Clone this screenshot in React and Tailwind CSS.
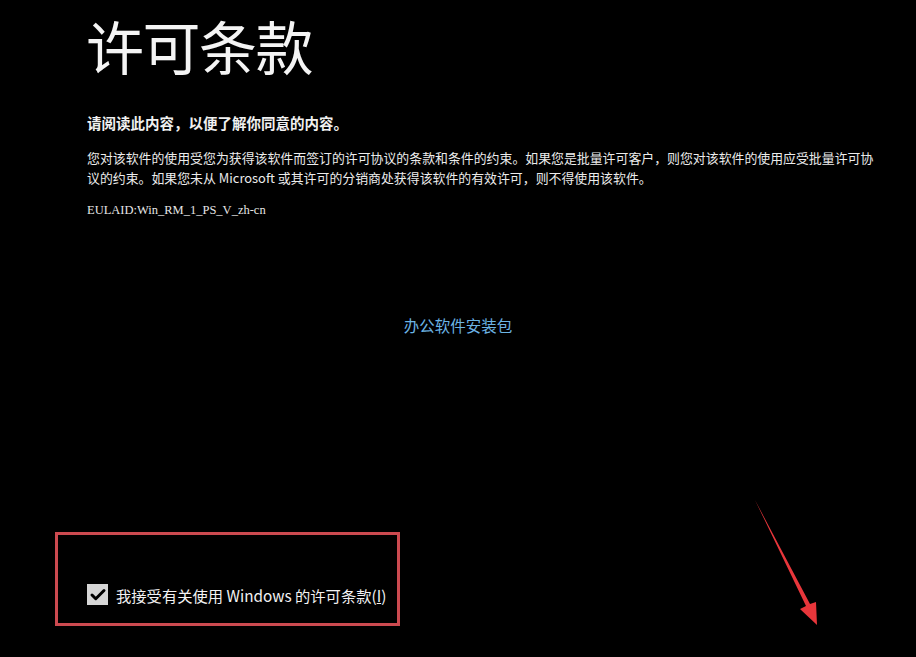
import { Check } from 'lucide-react';

const cjk = { fontFamily: '"Noto Sans CJK SC", "Noto Sans", sans-serif' };

export default function App() {
    return (
        <div className="relative w-[916px] h-[657px] overflow-hidden bg-black text-white font-['Noto_Sans_CJK_SC',sans-serif]">
            <div className="flex flex-col pl-[87px] pr-[20px]">
                {/* Title */}
                <h1 className="mt-[11px] -ml-[1px] text-[58px] leading-[68px] font-normal tracking-[-1.5px] text-[#f4f4f4]">许可条款</h1>

                <p className="mt-[34px] text-[14.5px] leading-[20px] font-bold text-[#f0f0f0]">请阅读此内容，以便了解你同意的内容。</p>

                <p className="mt-[15px] text-[12.9px] leading-[20px] text-[#ececec]">
                    您对该软件的使用受您为获得该软件而签订的许可协议的条款和条件的约束。如果您是批量许可客户，则您对该软件的使用应受批量许可协<br />
                    议的约束。如果您未从 Microsoft 或其许可的分销商处获得该软件的有效许可，则不得使用该软件。
                </p>

                <p className="mt-[12px] text-[12.5px] leading-[20px] text-[#e6e6e6] font-['Liberation_Serif',serif]">EULAID:Win_RM_1_PS_V_zh-cn</p>
            </div>

            {/* Link */}
            <div className="mt-[95px] flex justify-center">
                <a className="text-[15.5px] leading-[20px] text-[#6cb4e4]">办公软件安装包</a>
            </div>

            {/* Accept checkbox */}
            <div className="ml-[55px] mt-[197px] w-[345px] h-[94px] border-[3px] border-[#cc4a50] flex items-end pb-[18px] pl-[29px]">
                <label className="flex items-center gap-[8px]">
                    <span className="w-[21px] h-[21px] bg-[#d6d6d6] flex items-center justify-center">
                        <Check size={18} strokeWidth={4} className="text-black" />
                    </span>
                    <span className="text-[15.3px] leading-[20px] text-[#f2f2f2]" style={cjk}>
                        我接受有关使用 Windows 的许可条款(<span className="underline">I</span>)
                    </span>
                </label>
            </div>

            {/* Red arrow annotation */}
            <svg className="absolute left-[745px] top-[495px]" width="90" height="140" viewBox="0 0 90 140">
                <path d="M10 5 L61 111 L55 114 L72 130 L71 107 L65 109 Z" fill="#e8363b" />
            </svg>
        </div>
    );
}
